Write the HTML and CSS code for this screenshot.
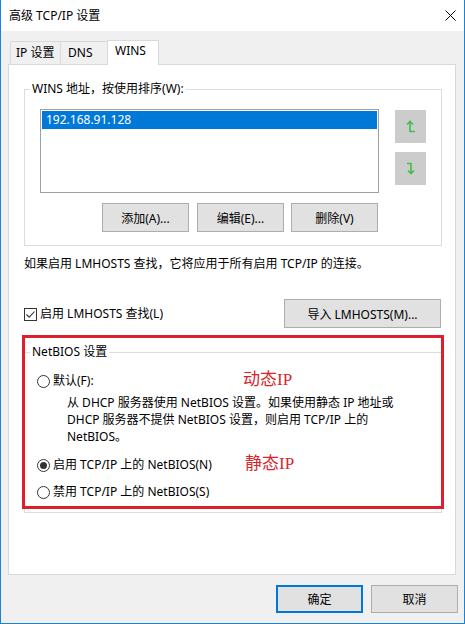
FILE: index.html
```html
<!DOCTYPE html>
<html>

<head>
    <title>高级 TCP/IP 设置</title>
    <meta charset="UTF-8">
    <link rel="stylesheet" href="styles.css">
</head>

<body>
    <div class="window">
        <div class="titlebar">
            <span>高级 TCP/IP 设置</span>
            <svg class="close" width="11" height="11" viewBox="0 0 11 11">
                <path d="M0.5 0.5 L10.5 10.5 M10.5 0.5 L0.5 10.5" stroke="#000" stroke-width="1" fill="none" />
            </svg>
        </div>

        <div class="content">
            <div class="tabs">
                <div class="tab tab-ip">IP 设置</div>
                <div class="tab tab-dns">DNS</div>
                <div class="tab tab-active">WINS</div>
            </div>

            <div class="panel">
                <div class="group group-wins">
                    <span class="legend">WINS 地址，按使用排序(W):</span>
                    <div class="wins-main">
                        <div class="listbox">
                            <div class="list-item selected">192.168.91.128</div>
                        </div>
                        <div class="list-buttons">
                            <button class="btn">添加(A)...</button>
                            <button class="btn">编辑(E)...</button>
                            <button class="btn">删除(V)</button>
                        </div>
                    </div>
                    <div class="order-buttons">
                        <button class="order-btn">
                            <svg width="10" height="13" viewBox="0 0 10 13">
                                <path d="M1 4.5 L4 1.5 L7 4.5 M4 1.5 V11.5 H9" stroke="#3fbf4a" stroke-width="1.6" fill="none" />
                            </svg>
                        </button>
                        <button class="order-btn">
                            <svg width="10" height="13" viewBox="0 0 10 13">
                                <path d="M1 1.5 H5 V11.5 M2 8.5 L5 11.5 L8 8.5" stroke="#3fbf4a" stroke-width="1.6" fill="none" />
                            </svg>
                        </button>
                    </div>
                </div>

                <p class="info">如果启用 LMHOSTS 查找，它将应用于所有启用 TCP/IP 的连接。</p>

                <div class="lmhosts-row">
                    <label class="check-label">
                        <span class="checkbox">
                            <svg width="11" height="11" viewBox="0 0 11 11">
                                <path d="M1.5 5.5 L4.2 8.2 L9.5 2.5" stroke="#333" stroke-width="1.1" fill="none" />
                            </svg>
                        </span>
                        启用 LMHOSTS 查找(L)
                    </label>
                    <button class="btn btn-import">导入 LMHOSTS(M)...</button>
                </div>

                <div class="group group-netbios">
                    <span class="legend">NetBIOS 设置</span>
                    <div class="radio-row">
                        <span class="radio"></span>
                        <span class="radio-text">默认(F):</span>
                        <span class="note">动态IP</span>
                    </div>
                    <p class="desc">从 DHCP 服务器使用 NetBIOS 设置。如果使用静态 IP 地址或<br>DHCP 服务器不提供 NetBIOS 设置，则启用 TCP/IP 上的<br>NetBIOS。</p>
                    <div class="radio-row row-enable">
                        <span class="radio checked"></span>
                        <span class="radio-text">启用 TCP/IP 上的 NetBIOS(N)</span>
                        <span class="note note-static">静态IP</span>
                    </div>
                    <div class="radio-row row-disable">
                        <span class="radio"></span>
                        <span class="radio-text">禁用 TCP/IP 上的 NetBIOS(S)</span>
                    </div>
                </div>

                <!-- red annotation box drawn over the screenshot -->
                <div class="highlight"></div>
            </div>

            <div class="footer">
                <button class="btn btn-ok">确定</button>
                <button class="btn">取消</button>
            </div>
        </div>
    </div>
</body>

</html>
```

FILE: styles.css
```css
* {
    box-sizing: border-box;
}

body {
    margin: 0;
    font-family: "Noto Sans", "Noto Sans CJK SC", sans-serif;
    font-size: 12px;
    line-height: 16px;
    color: #000;
}

.window {
    width: 465px;
    height: 624px;
    border: 1px solid #1883d7;
    border-top: none;
    background-color: #f0f0f0;
}

/* Title bar */
.titlebar {
    height: 31px;
    background-color: #fff;
    display: flex;
    align-items: center;
    justify-content: space-between;
    padding: 0 8px 0 8px;
}

.close {
    display: block;
}

.content {
    padding: 9px 8px 0 7px;
}

/* Tabs */
.tabs {
    display: flex;
    align-items: flex-end;
    height: 24px;
    margin-left: 2px;
}

.tab {
    height: 23px;
    border-top: 1px solid #d9d9d9;
    border-left: 1px solid #d9d9d9;
    padding-top: 3px;
    white-space: nowrap;
}

.tab-ip {
    width: 50px;
    padding-left: 5px;
}

.tab-dns {
    width: 47px;
    padding-left: 7px;
}

.tab-active {
    position: relative;
    z-index: 1;
    width: 52px;
    height: 25px;
    margin-bottom: -1px;
    padding-top: 2px;
    padding-left: 7px;
    background-color: #fff;
    border-right: 1px solid #d9d9d9;
}

.panel {
    position: relative;
    height: 511px;
    background-color: #fff;
    border: 1px solid #d9d9d9;
    padding-top: 24px;
}

/* Group boxes */
.group {
    position: relative;
    margin: 0 13px 0 15px;
    border: 1px solid #dcdcdc;
}

.legend {
    position: absolute;
    top: -9px;
    left: 5px;
    padding: 0 2px;
    background-color: #fff;
    white-space: nowrap;
}

.group-wins {
    display: flex;
    gap: 16px;
    padding: 19px 15px 13px 15px;
}

.wins-main {
    width: 339px;
}

.listbox {
    height: 84px;
    border: 1px solid #a0a0a0;
    padding: 1px;
}

.list-item {
    height: 18px;
    line-height: 18px;
    padding-left: 4px;
}

.list-item.selected {
    background-color: #0078d7;
    color: #fff;
}

.list-buttons {
    display: flex;
    justify-content: flex-end;
    gap: 8px;
    margin-top: 10px;
    padding-right: 1px;
}

.btn {
    width: 87px;
    height: 29px;
    padding: 0;
    font-family: inherit;
    font-size: 12px;
    color: #000;
    background-color: #e1e1e1;
    border: 1px solid #adadad;
}

.list-buttons .btn:last-child {
    margin-left: -1px;
}

.order-buttons {
    display: flex;
    flex-direction: column;
    gap: 9px;
    padding-top: 1px;
}

.order-btn {
    width: 31px;
    height: 33px;
    padding: 0;
    border: none;
    background-color: #cccccc;
    display: flex;
    align-items: center;
    justify-content: center;
}

.order-btn svg {
    display: block;
}

.info {
    margin: 10px 0 0 15px;
    white-space: nowrap;
}

/* LMHOSTS row */
.lmhosts-row {
    display: flex;
    align-items: center;
    justify-content: space-between;
    margin: 27px 14px 0 15px;
}

.check-label {
    display: flex;
    align-items: center;
    gap: 3px;
    padding-top: 1px;
}

.checkbox {
    width: 13px;
    height: 13px;
    border: 1px solid #333;
    display: flex;
    align-items: center;
    justify-content: center;
}

.btn-import {
    width: 157px;
}

/* NetBIOS group */
.group-netbios {
    margin-top: 24px;
    height: 161px;
    padding: 20px 0 12px 12px;
}

.radio-row {
    display: flex;
    align-items: center;
    height: 16px;
}

.radio {
    width: 13px;
    height: 13px;
    border: 1px solid #333;
    border-radius: 50%;
    margin-right: 3px;
    display: flex;
    align-items: center;
    justify-content: center;
}

.radio.checked::after {
    content: '';
    width: 7px;
    height: 7px;
    border-radius: 50%;
    background-color: #333;
}

.radio-text {
    width: 190px;
    white-space: nowrap;
}

.note {
    font-family: "Liberation Serif", "Noto Sans CJK SC", serif;
    font-size: 17px;
    color: #d8252b;
    margin-top: -2px;
}

.note-static {
    margin-left: 2px;
}

.desc {
    margin: 5px 0 0 30px;
    line-height: 17px;
    white-space: nowrap;
}

.row-enable {
    margin-top: 12px;
}

.row-disable {
    margin-top: 11px;
}

.highlight {
    position: absolute;
    left: 13px;
    top: 270px;
    width: 422px;
    height: 174px;
    border: 3px solid #dc1e2d;
}

/* Dialog buttons */
.footer {
    display: flex;
    justify-content: flex-end;
    gap: 8px;
    margin-top: 10px;
    margin-right: -2px;
}

.footer .btn {
    height: 28px;
}

.footer .btn-ok {
    border: 2px solid #0078d7;
}
```
